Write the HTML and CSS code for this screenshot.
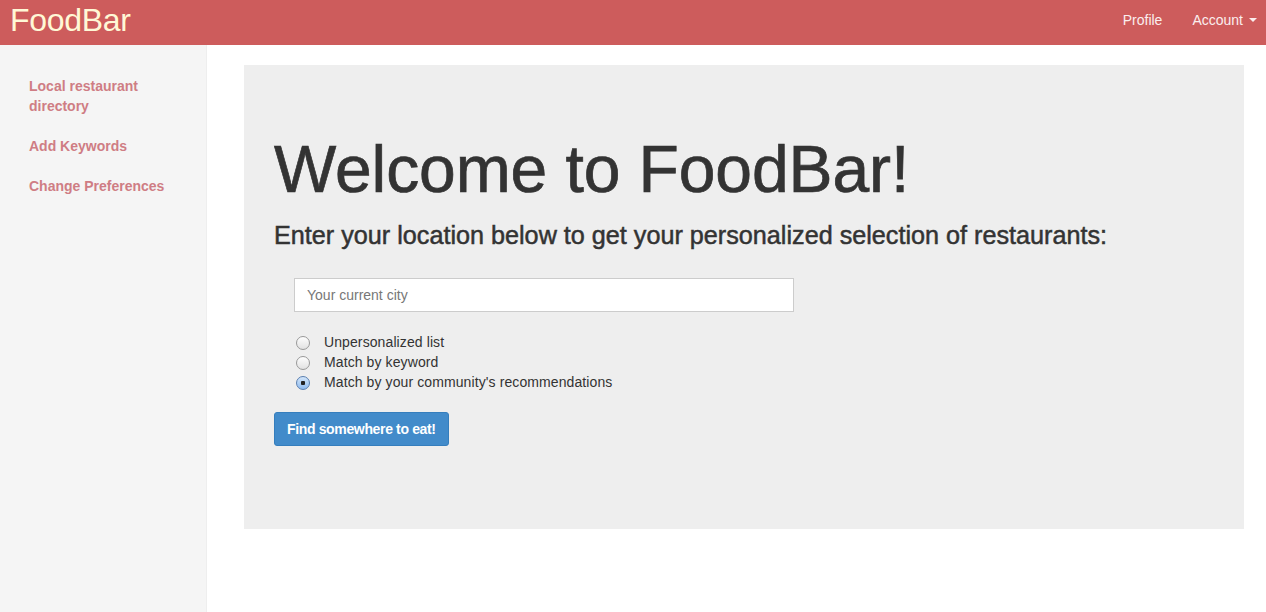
FILE: index.html
```html
<!DOCTYPE html>
<html lang="en">
<head>
<meta charset="utf-8">
<title>FoodBar</title>
<link rel="stylesheet" href="styles.css">
</head>
<body>
<header class="navbar">
  <a class="brand" href="#">FoodBar</a>
  <nav class="nav-right">
    <a class="nav-link" href="#">Profile</a>
    <a class="nav-link" href="#">Account <span class="caret"></span></a>
  </nav>
</header>
<div class="layout">
  <aside class="sidebar">
    <ul class="side-nav">
      <li><a href="#">Local restaurant directory</a></li>
      <li><a href="#">Add Keywords</a></li>
      <li><a href="#">Change Preferences</a></li>
    </ul>
  </aside>
  <main class="main">
    <section class="jumbotron">
      <h1 class="title">Welcome to FoodBar!</h1>
      <h3 class="subtitle">Enter your location below to get your personalized selection of restaurants:</h3>
      <form class="search-form">
        <input class="city-input" type="text" placeholder="Your current city">
        <div class="radios">
          <label class="radio"><input type="radio" name="mode"><span>Unpersonalized list</span></label>
          <label class="radio"><input type="radio" name="mode"><span>Match by keyword</span></label>
          <label class="radio"><input type="radio" name="mode" checked><span>Match by your community's recommendations</span></label>
        </div>
        <button class="btn-primary" type="button">Find somewhere to eat!</button>
      </form>
    </section>
  </main>
</div>
</body>
</html>
```

FILE: styles.css
```css
* { box-sizing: border-box; }
html, body { height: 100%; }
body {
  margin: 0;
  font-family: "Liberation Sans", Arial, Helvetica, sans-serif;
  font-size: 14px;
  line-height: 20px;
  color: #333;
  background: #fff;
  display: flex;
  flex-direction: column;
}
a { text-decoration: none; }

.navbar {
  height: 45px;
  background: #cd5c5c;
  display: flex;
  align-items: flex-start;
  justify-content: space-between;
  padding: 0 9px 0 10px;
  flex-shrink: 0;
}
.brand {
  color: #fff8d6;
  font-size: 32px;
  line-height: 40px;
  letter-spacing: -0.3px;
}
.nav-right { display: flex; gap: 30px; padding-top: 10px; }
.nav-link {
  color: #fbeeee;
  font-size: 14px;
  line-height: 20px;
  display: flex;
  align-items: center;
}
.caret {
  display: inline-block;
  width: 0; height: 0;
  margin-left: 6px;
  border-top: 4px solid #fbeeee;
  border-left: 4px solid transparent;
  border-right: 4px solid transparent;
}

.layout { flex: 1; display: flex; }
.sidebar {
  width: 207px;
  background: #f5f5f5;
  border-right: 1px solid #eee;
  padding-top: 21px;
}
.side-nav { list-style: none; margin: 0; padding: 0; }
.side-nav li a {
  display: block;
  padding: 10px 20px 10px 29px;
  color: #cf7d84;
  font-weight: bold;
  font-size: 14px;
  line-height: 20px;
}

.main { flex: 1; padding: 20px 22px 0 37px; }
.jumbotron {
  background: #eee;
  height: 464px;
  padding: 48px 30px;
}
.title {
  margin: 20px 0 0;
  font-size: 66px;
  line-height: 72px;
  font-weight: normal;
  color: #333;
  letter-spacing: -0.1px;
  -webkit-text-stroke: 0.7px #333;
}
.subtitle {
  margin: 16px 0 0;
  font-size: 25.2px;
  line-height: 28px;
  font-weight: normal;
  color: #333;
  -webkit-text-stroke: 0.5px #333;
}
.search-form { margin-top: 29px; }
.city-input {
  display: block;
  margin-left: 20px;
  width: 500px;
  height: 34px;
  border: 1px solid #ccc;
  background: #fff;
  padding: 6px 12px;
  font-family: inherit;
  font-size: 14px;
  color: #555;
}
.city-input::placeholder { color: #777; }
.radios { margin: 20px 0 0 22px; display: flex; flex-direction: column; }
.radio { display: flex; align-items: center; height: 20px; gap: 14px; font-size: 14px; letter-spacing: 0.1px; }
.radio input {
  appearance: none;
  -webkit-appearance: none;
  margin: 0;
  width: 14px; height: 14px;
  border-radius: 50%;
  border: 1px solid #999;
  background: linear-gradient(#fdfdfd, #e2e2e2);
  position: relative;
  top: 1px;
}
.radio input:checked {
  border-color: #5a7fb0;
  background: radial-gradient(circle, #222 0 2px, transparent 2.5px), linear-gradient(#d3e6fa, #8fbbef);
}
.btn-primary {
  margin-top: 20px;
  height: 34px;
  padding: 0 12px;
  background: #428bca;
  border: 1px solid #357ebd;
  border-radius: 3px;
  color: #fff;
  font-family: inherit;
  font-size: 14px;
  font-weight: bold;
  letter-spacing: -0.35px;
}
```
